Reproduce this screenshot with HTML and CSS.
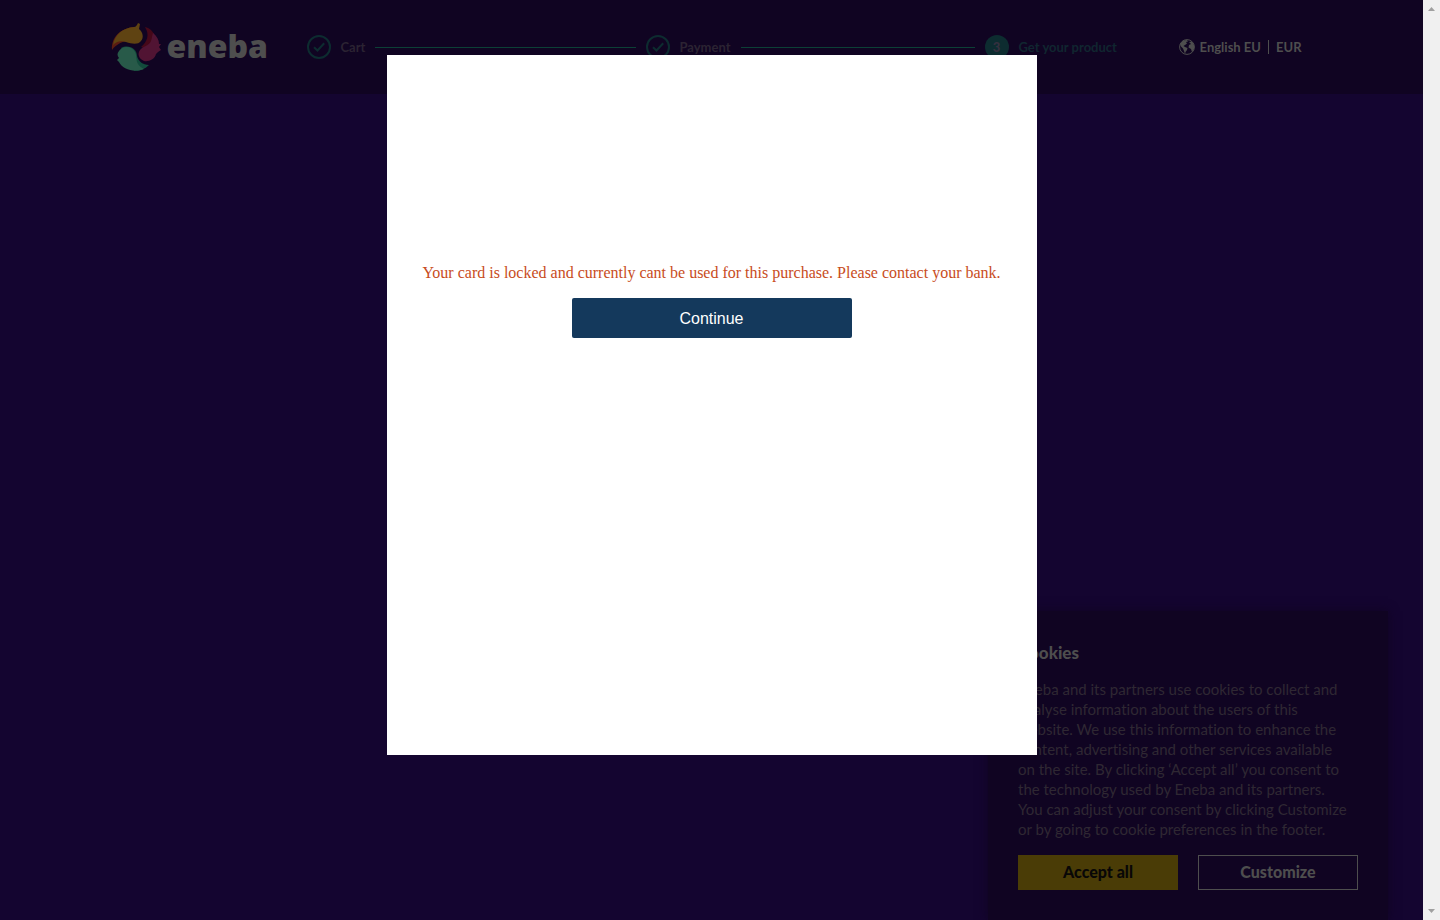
FILE: index.html
```html
<!DOCTYPE html>
<html lang="en">
<head>
<meta charset="utf-8">
<title>Eneba checkout</title>
<link rel="stylesheet" href="styles.css">
</head>
<body>
<div class="page">
  <header class="header">
    <div class="header-inner">
      <a class="logo" href="#">
        <svg class="logo-mark" viewBox="0 0 48 48" aria-hidden="true">
          <path fill="#5a1c12" d="M0 27C-1 14 9 5 22 4L27 19C16 16 6 19 0 27Z"/>
          <path fill="#5f4312" d="M1 22C3 11 11 5 22 4C24 4 25 2 26 0L28 1L27 6C31 9 32 15 29 18C26 22 20 21 14 19C8 17 4 19 1 22Z"/>
          <path fill="#450819" d="M33 4C38 5 42 9 43 14L36 26L29 24C35 19 38 12 33 4Z"/>
          <path fill="#511433" d="M41 10C45 13 47 17 47 21L49 21L47 24L49 27L46 29L44 31C43 36 37 39 32 38C27 36 25 31 28 27C31 23 37 23 39 18C40 15 40 13 41 10Z"/>
          <path fill="#124b3c" d="M9 25C17 21 25 26 25 33C26 38 31 42 37 42C33 46 28 48 22 48Z"/>
          <path fill="#285a49" d="M7 28C11 22 20 23 23 29C26 35 22 41 32 46C22 50 10 46 7 39L5 37L7 35C5 33 5 30 7 28Z"/>
        </svg>
        <span class="logo-name">eneba</span>
      </a>
      <ol class="steps">
        <li class="step step-done">
          <svg class="step-icon" viewBox="0 0 24 24" aria-hidden="true"><circle cx="12" cy="12" r="11"/><path d="M7 12.2L10.5 15.5L17.2 8.3"/></svg>
          <span>Cart</span><i class="step-line"></i>
        </li>
        <li class="step step-done">
          <svg class="step-icon" viewBox="0 0 24 24" aria-hidden="true"><circle cx="12" cy="12" r="11"/><path d="M7 12.2L10.5 15.5L17.2 8.3"/></svg>
          <span>Payment</span><i class="step-line"></i>
        </li>
        <li class="step step-current"><b class="step-number">3</b><span>Get your product</span></li>
      </ol>
      <button class="locale" type="button">
        <svg class="globe" viewBox="0 0 16 16" aria-hidden="true">
          <circle cx="8" cy="8" r="7.4" fill="none" stroke="#4e4e4e"/>
          <path fill="#4e4e4e" d="M1 5L4 1.5L8 1L9 2.5L7 3L8 4.5L6 6L4.500 7L6 8L8.500 9L8 11L6.500 13L6 15L5 12L4 9.500L2 7.500ZM10 3L13 2.500L15 6L15 10L13 13L12 10L9.500 8.500L10 6L12 5Z"/>
        </svg>
        <span>English EU</span><span class="currency">EUR</span>
      </button>
    </div>
  </header>

  <section class="cookies" aria-labelledby="cookies-title">
    <h2 class="cookies-title" id="cookies-title">Cookies</h2>
    <p class="cookies-text">Eneba and its partners use cookies to collect and<br>analyse information about the users of this<br>website. We use this information to enhance the<br>content, advertising and other services available<br>on the site. By clicking ‘Accept all’ you consent to<br>the technology used by Eneba and its partners.<br>You can adjust your consent by clicking Customize<br>or by going to cookie preferences in the footer.</p>
    <div class="cookies-actions">
      <button class="btn btn-accept" type="button">Accept all</button>
      <button class="btn btn-customize" type="button">Customize</button>
    </div>
  </section>

  <div class="overlay">
    <div class="modal" role="dialog" aria-modal="true" aria-describedby="card-error">
      <p class="card-error" id="card-error">Your card is locked and currently cant be used for this purchase. Please contact your bank.</p>
      <button class="continue" type="button">Continue</button>
    </div>
  </div>
</div>
<div class="scrollbar" aria-hidden="true">
  <svg class="arrow" viewBox="0 0 7 4"><path d="M0 4L3.500 0L7 4Z"/></svg>
  <svg class="arrow" viewBox="0 0 7 4"><path d="M0 0L3.500 4L7 0Z"/></svg>
</div>
</body>
</html>
```
FILE: styles.css
```css
* { box-sizing: border-box; }
body {
  margin: 0;
  display: flex;
  min-height: 100vh;
  background: #140530;
  font-family: Lato, "Open Sans", sans-serif;
  font-variant-ligatures: none;
}
button { font-family: inherit; cursor: pointer; }
.page { position: relative; flex: 1; overflow: hidden; }
.header { background: #100422; }
.header-inner {
  display: flex;
  align-items: center;
  max-width: 1200px;
  height: 94px;
  margin: 0 auto;
  padding-right: 10px;
}
.logo { display: flex; align-items: center; gap: 7px; width: 195px; text-decoration: none; }
.logo-mark { width: 48px; height: 48px; overflow: visible; }
.logo-name { padding-bottom: 3px; font: 800 32px/45px "Open Sans", sans-serif; color: #4e4e4e; }
.steps {
  display: flex;
  flex: 1;
  margin: 0;
  padding: 0;
  list-style: none;
  font-size: 13px;
  font-weight: 700;
  color: #2b2332;
}
.step { display: flex; align-items: center; gap: 10px; }
.step-done { flex: 0 0 339px; padding-right: 10px; }
.step-icon { width: 24px; height: 24px; fill: none; stroke: #0d2c30; stroke-width: 2; }
.step-line { flex: 1; height: 1px; background: #0c4036; }
.step-number {
  width: 24px;
  border-radius: 50%;
  background: #0d2c30;
  color: #35303f;
  line-height: 24px;
  text-align: center;
}
.step-current { color: #102630; white-space: nowrap; }
.locale {
  display: flex;
  align-items: center;
  gap: 5px;
  padding: 0;
  border: 0;
  background: none;
  color: #4e4e4e;
  font-size: 13px;
  line-height: 16px;
  font-weight: 700;
  white-space: nowrap;
}
.globe { width: 16px; height: 16px; }
.currency { margin-left: 2px; padding-left: 7px; border-left: 1px solid #4e4e4e; line-height: 14px; }
.cookies {
  position: absolute;
  right: 35px;
  bottom: 0;
  width: 400px;
  padding: 30px;
  background: #100422;
  box-shadow: 0 0 10px #100422;
}
.cookies-title { margin: 0 0 14px; font-size: 17px; line-height: 24px; font-weight: 900; color: #4e4e4e; }
.cookies-text { margin: 0 0 16px; font-size: 15px; line-height: 20px; color: #2f2833; white-space: nowrap; }
.cookies-actions { display: grid; grid-template-columns: 1fr 1fr; gap: 20px; }
.btn { height: 35px; padding: 0 0 2px; border: 0; font-size: 16px; font-weight: 900; }
.btn-accept { background: #4a3c06; color: #080706; }
.btn-customize { border: 1px solid #4e4e4e; background: none; color: #4e4e4e; }
.overlay { position: absolute; inset: 0; display: flex; justify-content: center; align-items: flex-start; padding-top: 55px; }
.modal {
  display: flex;
  flex-direction: column;
  align-items: center;
  gap: 15px;
  width: 650px;
  min-height: 700px;
  padding-top: 208px;
  background: #fff;
}
.card-error { margin: 0; font: 16px/20px "Liberation Serif", serif; color: #c84c1c; white-space: nowrap; }
.continue {
  width: 280px;
  height: 40px;
  padding: 2px 0 0;
  border: 0;
  border-radius: 2px;
  background: #14395c;
  color: #fff;
  font: 16px "Liberation Sans", sans-serif;
}
.scrollbar {
  display: flex;
  flex-direction: column;
  justify-content: space-between;
  align-items: center;
  width: 17px;
  padding: 7px 0;
  background: #f0f0f0;
}
.arrow { width: 7px; height: 4px; fill: #a0a0a0; }
```
